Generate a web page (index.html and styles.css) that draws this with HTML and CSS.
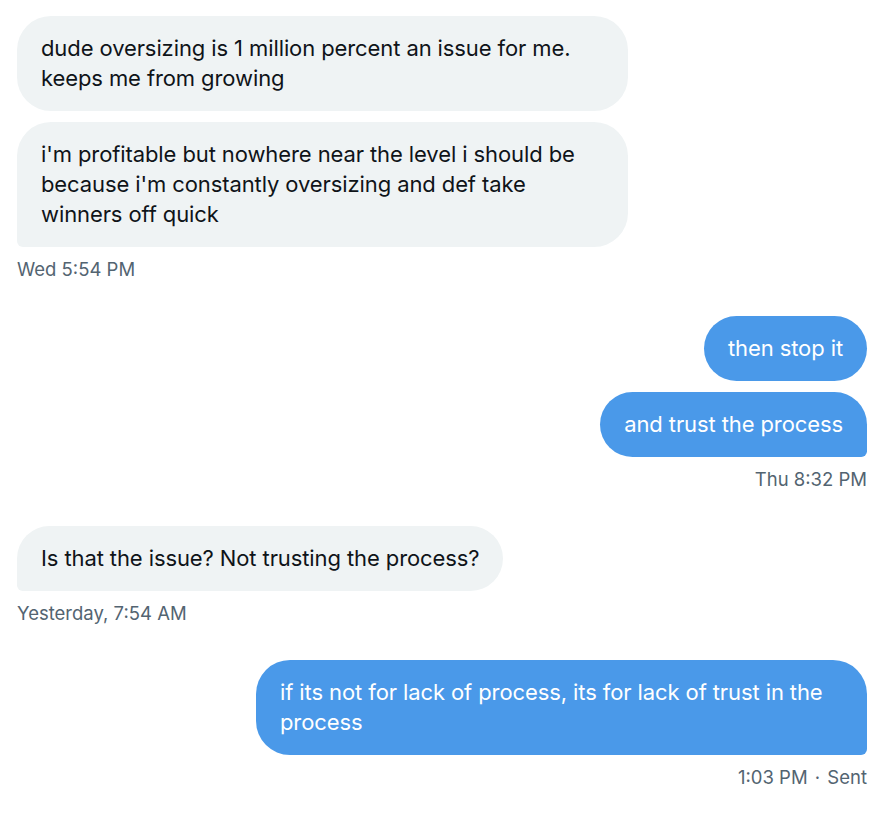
FILE: index.html
```html
<!DOCTYPE html>
<html>
<head>
<meta charset="utf-8">
<link rel="stylesheet" href="styles.css">
</head>
<body>
<div class="chat">
  <div class="group received">
    <div class="bubble">dude oversizing is 1 million percent an issue for me. keeps me from growing</div>
    <div class="bubble last">i'm profitable but nowhere near the level i should be because i'm constantly oversizing and def take winners off quick</div>
    <div class="ts">Wed 5:54 PM</div>
  </div>
  <div class="group sent">
    <div class="bubble">then stop it</div>
    <div class="bubble last">and trust the process</div>
    <div class="ts">Thu 8:32 PM</div>
  </div>
  <div class="group received">
    <div class="bubble last">Is that the issue? Not trusting the process?</div>
    <div class="ts">Yesterday, 7:54 AM</div>
  </div>
  <div class="group sent">
    <div class="bubble last">if its not for lack of process, its for lack of trust in the process</div>
    <div class="ts">1:03 PM <span class="dot">·</span> Sent</div>
  </div>
</div>
</body>
</html>
```
FILE: styles.css
```css
html, body {
  margin: 0;
  padding: 0;
  background: #ffffff;
}
body {
  font-family: Inter, "Noto Sans", sans-serif;
}
.chat {
  display: flex;
  flex-direction: column;
  gap: 36px;
  padding: 16px 23px 0 17px;
}
.group {
  display: flex;
  flex-direction: column;
  gap: 11px;
}
.group.received {
  align-items: flex-start;
}
.group.sent {
  align-items: flex-end;
}
.bubble {
  max-width: 611px;
  box-sizing: border-box;
  padding: 17px 24px 18px;
  font-size: 22px;
  line-height: 30px;
  letter-spacing: -0.1px;
  border-radius: 34px;
}
.received .bubble {
  background: #eff3f4;
  color: #0f1419;
}
.sent .bubble {
  background: #4a99e9;
  color: #ffffff;
}
.received .bubble.last {
  border-bottom-left-radius: 6px;
}
.sent .bubble.last {
  border-bottom-right-radius: 6px;
}
.ts {
  font-size: 18.5px;
  line-height: 22px;
  color: #536471;
}
.dot {
  margin: 0 2px;
}
```
